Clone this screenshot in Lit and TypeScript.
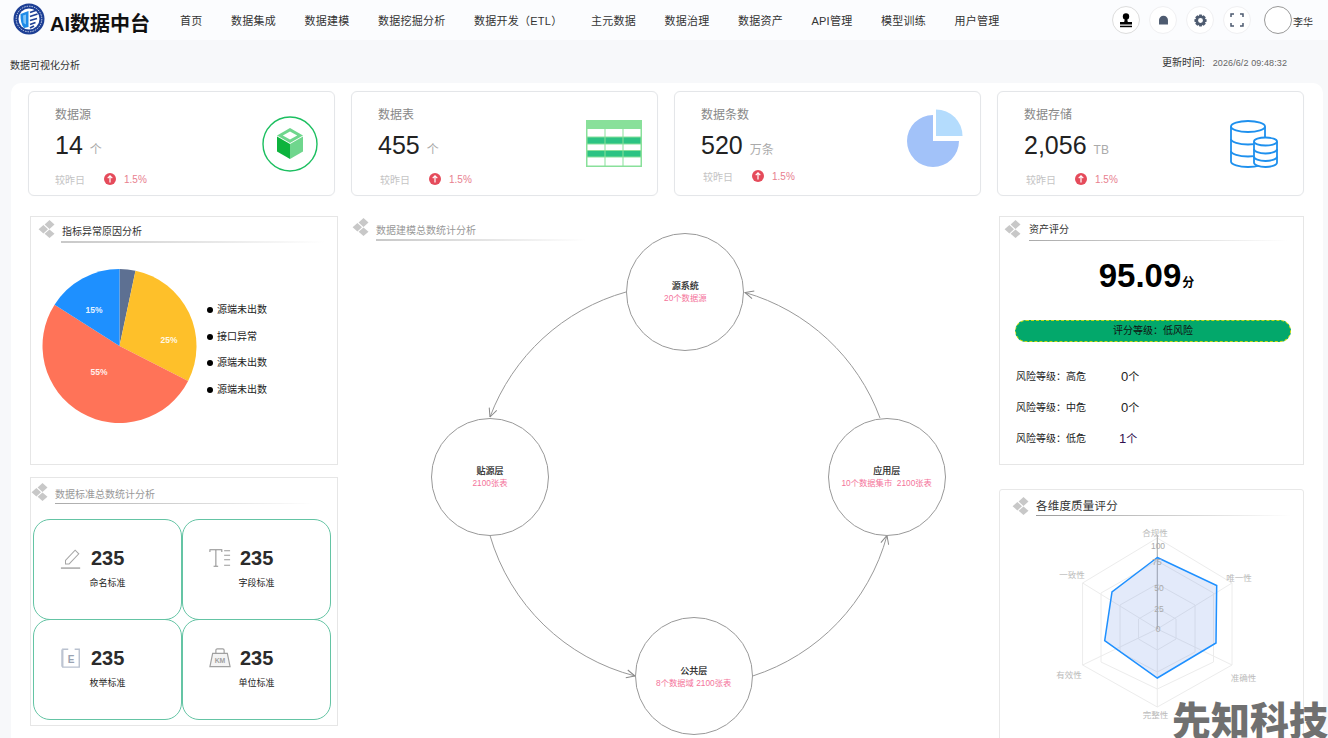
import { LitElement, html, css, svg } from "lit";
import { customElement } from "lit/decorators.js";

const NAV = ["首页","数据集成","数据建模","数据挖掘分析","数据开发（ETL）","主元数据","数据治理","数据资产","API管理","模型训练","用户管理"];

const diamonds = html`<svg class="dia" viewBox="0 0 18 18"><path d="M11.5 0 16.5 4.6 11.5 9 6.6 4.6Z M5.4 5 10 9.3 5.4 13.4 .6 9.3Z M11.5 9.6 16.5 13.8 11.5 18 6.6 13.8Z" fill="#c8c8c8"/></svg>`;

function arcPath(cx:number,cy:number,r:number,a:number,b:number){
  const p=(d:number)=>{const t=(d-90)*Math.PI/180;return `${(cx+r*Math.cos(t)).toFixed(2)} ${(cy+r*Math.sin(t)).toFixed(2)}`};
  return `M${cx} ${cy}L${p(a)}A${r} ${r} 0 ${b-a>180?1:0} 1 ${p(b)}Z`;
}

const PIE=[[0,12,"#5d7092"],[12,117,"#fec02a"],[117,302.5,"#ff7358"],[302.5,360,"#1e90ff"]] as [number,number,string][];
const PIE_LABELS=[[94,313,"15%"],[169,343,"25%"],[99,375,"55%"]] as [number,number,string][];

const RINGS=[
  [[1157.3,538],[1232,583],[1232,665],[1157.3,707],[1082.6,665],[1082.6,583]],
  [[1157.3,561],[1213.5,593],[1213.5,662],[1157.3,689],[1101,662],[1101,593]],
  [[1157.3,584],[1195,605],[1195,652],[1157.3,672],[1120,652],[1120,605]],
  [[1157.3,608],[1176,619],[1176,639],[1157.3,650],[1138.5,639],[1138.5,619]],
];
const DATA=[[1157.3,557.5],[1216.7,585.5],[1216,643],[1157.3,678],[1104.7,640.7],[1112,592]];
const pts=(a:number[][])=>a.map(p=>p.join(",")).join(" ");
const AXIS=[[1155,536,"合规性"],[1239,581,"唯一性"],[1243.5,681,"准确性"],[1155.5,718,"完整性"],[1069,678,"有效性"],[1072,578,"一致性"]] as [number,number,string][];
const TICKS=[[1158,549,"100"],[1157,565,"75"],[1159,591,"50"],[1159,612,"25"],[1158,632,"0"]] as [number,number,string][];

const NODES=[
  {x:685.3,y:291.7,t:"源系统",s:"20个数据源"},
  {x:490,y:476.7,t:"贴源层",s:"2100张表"},
  {x:886.7,y:476.7,t:"应用层",s:"10个数据集市\u00a0\u00a02100张表"},
  {x:693.7,y:676,t:"公共层",s:"8个数据域 2100张表"},
];
const ARCS=["M626 292A204 204 0 0 0 490 417","M490 535.5A204 204 0 0 0 635 676","M752.7 676A204 204 0 0 0 887 535.5","M880 418A204 204 0 0 0 745 292.5"];

const TABLE_ROWS=[[9,16.5,"#fff"],[17.5,23.5,"#2cc383"],[24.5,30,"#fff"],[31,36.5,"#2cc383"],[37.5,45.5,"#fff"]] as [number,number,string][];
const TABLE_COLS=[[1.5,17],[19.5,17],[37.5,17]];

const icoCube=html`<svg class="ci c1" viewBox="0 0 56 56"><circle cx="28" cy="28" r="27" fill="none" stroke="#1cbf60" stroke-width="1.4"/><path d="M28 12 41 19.5 28 27 15 19.5Z" fill="#6fd68d"/><path d="M28 15.5 35.200 19.5 28 23.500 20.800 19.5Z" fill="#fff"/><path d="M15 20.5 28 28V43L15 35.5Z" fill="#0db33d"/><path d="M41 20.5 28 28V43L41 35.5Z" fill="#6fd68d"/></svg>`;
const icoTable=html`<svg class="ci c2" viewBox="0 0 56 47"><rect width="56" height="47" fill="#89e09a"/>${TABLE_ROWS.flatMap(([a,b,c])=>TABLE_COLS.map(([x,w])=>svg`<rect x="${x}" y="${a}" width="${w}" height="${b-a}" fill="${c}"/>`))}</svg>`;
const icoPie=html`<svg class="ci c3" viewBox="0 0 56 58"><path d="${arcPath(26,32,26,90,360)}" fill="#a2c2f9"/><path d="${arcPath(29,27,26.5,0,90)}" fill="#b4dcfd"/></svg>`;
const icoDb=html`<svg class="ci c4" viewBox="0 0 48 48" fill="none" stroke="#1e90ee" stroke-width="1.8"><path d="M1 6.5V41.5C1 44.5 9 47 18 47S35 44.5 35 41.5V6.5"/><ellipse cx="18" cy="6.5" rx="17" ry="5.5"/><path d="M1 19C1 22 9 24.5 18 24.5S35 22 35 19M1 31C1 34 9 36.5 18 36.5S35 34 35 31"/><path d="M23.500 21.500V42.500C23.500 45 29 47 35.500 47S47 45 47 42.500V21.500Z" fill="#fff" stroke="none"/><path d="M24 21.500V42.500C24 45 29 47 35.500 47S47 45 47 42.500V21.500"/><ellipse cx="35.500" cy="21.500" rx="11.500" ry="4" fill="#fff"/><path d="M24 29C24 31.500 29 33.500 35.500 33.500S47 31.500 47 29M24 36.500C24 39 29 41 35.500 41S47 39 47 36.500"/></svg>`;

const CARDS=[
  {t:"数据源",v:"14",u:"个",i:icoCube,c:""},
  {t:"数据表",v:"455",u:"个",i:icoTable,c:"shift"},
  {t:"数据条数",v:"520",u:"万条",i:icoPie,c:"shift up"},
  {t:"数据存储",v:"2,056",u:"TB",i:icoDb,c:"shift"},
];

const icoPen=html`<svg class="si" viewBox="0 0 24 24" fill="none" stroke="#a6a6a6" stroke-width="1.1"><path d="M6 14.500 16.500 3.500 20.500 7.500 10 18.500H6Z"/><path d="M1 23H22" stroke-width="1.600"/></svg>`;
const icoT=html`<svg class="si" viewBox="0 0 24 24" fill="none" stroke="#8c8c8c" stroke-width="1.100"><path d="M1 5.500V3H14V5.500M7.500 3V21M5 21H10"/><path d="M16.500 4H23M16.500 9H23M16.500 14H23M16.500 20H23" stroke="#9a9a9a"/></svg>`;
const icoE=html`<svg class="si" viewBox="0 0 24 24" fill="none"><path d="M9 2.500H3V22H21V2.500H16" stroke="#b9c1cf" stroke-width="1.500"/><path d="M3.500 3H1.700V21.500" stroke="#c5ccd8"/><text x="12" y="17" text-anchor="middle" font-size="11" font-weight="700" fill="#9aa3b2" font-family="Liberation Sans">E</text></svg>`;
const icoKm=html`<svg class="si" viewBox="0 0 24 24" fill="none"><path d="M7.500 7V3.500C7.500 2.500 8.300 2 9 2H15C15.700 2 16.500 2.500 16.500 3.500V7" stroke="#a0a0a0" stroke-width="1.300"/><path d="M4 7H20L23 21.500H1Z" fill="#f4f4f4" stroke="#a0a0a0" stroke-width="1.300"/><text x="12" y="17.500" text-anchor="middle" font-size="7.500" font-weight="700" fill="#a0a0a0" font-family="Liberation Sans">KM</text></svg>`;
const STDS=[{i:icoPen,l:"命名标准"},{i:icoT,l:"字段标准"},{i:icoE,l:"枚举标准"},{i:icoKm,l:"单位标准"}];

@customElement("app-root")
export class AppRoot extends LitElement {
  static styles = css`
    :host{display:block;width:1328px;height:738px;overflow:hidden;position:relative;background:#f7f8fa;color:#222;font-family:"Liberation Sans","Noto Sans CJK SC",sans-serif;}
    *{box-sizing:border-box;}
    .hdr{height:40px;background:#fbfcfe;display:flex;align-items:center;padding-left:13px;}
    .logo{width:32px;height:32px;margin-top:-2px;flex:none;}
    .brand{font-size:20px;font-weight:700;color:#111;margin-left:5px;width:130px;flex:none;margin-top:8px;line-height:20px;}
    .nav{display:flex;gap:28.5px;font-size:11px;letter-spacing:.25px;color:#333;flex:none;width:932px;}
    .nav span{white-space:nowrap;}
    .tools{display:flex;align-items:center;gap:9px;}
    .tb{width:28px;height:28px;border-radius:50%;background:#fff;border:1px solid #f0f0f2;display:flex;align-items:center;justify-content:center;}
    .tb.on{border-color:#ddd;}
    .tb svg{width:16px;height:16px;}
    .tb svg.s13{width:13px;height:13px;}
    .ava{width:28px;height:28px;border-radius:50%;background:#fff;border:1px solid #999;margin-left:4px;}
    .who{font-size:10px;color:#333;margin-left:-8px;margin-top:2px;}
    .sub{height:43px;position:relative;display:flex;justify-content:space-between;padding:13px 41px 0 10px;font-size:10px;color:#333;}
    .sub .crumb{line-height:26px;}
    .sub .time{line-height:20px;}
    .sub .time b{font-weight:400;font-size:9px;color:#666;margin-left:8px;letter-spacing:.1px;}
    .main{margin-left:11px;width:1312px;height:700px;background:#fff;border-radius:10px 10px 0 0;padding:8px 17px 0;}
    .cards{display:grid;grid-template-columns:repeat(4,307px);gap:16px;}
    .card{height:105px;border:1px solid #e4e6e9;border-radius:6px;display:flex;justify-content:space-between;align-items:center;padding-left:26px;box-shadow:0 0 1px #eee;}
    .ctxt{align-self:flex-start;padding-top:14px;}
    .ct{font-size:12px;line-height:18px;color:#888;}
    .cv{display:flex;align-items:baseline;gap:7px;margin-top:6px;line-height:30px;font-size:25px;color:#222;}
    .cv i{font-style:normal;font-size:12px;color:#aaa;}
    .cc{display:flex;align-items:center;height:14px;margin-top:7px;font-size:10px;color:#c4c4c4;}
    .cc.shift{padding-left:2px;}
    .cc.up{margin-top:4px;}
    .cc .lb{width:49px;}
    .cc svg{width:12px;height:12px;margin-right:8px;}
    .cc .pc{color:#e8808f;}
    .ci{flex:none;}
    .c1{width:56px;height:56px;margin-right:16px;}
    .c2{width:56px;height:47px;margin-right:15px;}
    .c3{width:56px;height:58px;margin:-12px 17px 0 0;}
    .c4{width:48px;height:48px;margin-right:25px;}
    .cols{display:grid;grid-template-columns:308px 635px 307px;column-gap:12px;margin:20px 0 0 2px;}
    .cols>.mid{margin-right:-2px;}
    .left,.right{display:flex;flex-direction:column;}
    .left{gap:12px;}
    .right{gap:24px;margin-left:2px;}
    .panel{height:249px;border:1px solid #e6e6e6;padding:1px;background:#fff;flex:none;}
    .ph{display:flex;align-items:flex-start;gap:6px;}
    .dia{width:18px;height:18px;flex:none;}
    .pt{flex:1;font-size:10px;line-height:14px;background:linear-gradient(90deg,#c8c8c8,#fff) left bottom/100% 2px no-repeat;}
    .pA .ph{padding:2px 11px 0 6px;}
    .pA .pt{color:#333;padding:5px 0 4px 1px;margin-left:-1px;}
    .pB .ph{padding:4px 22px 0 0;margin-left:-1px;}
    .pB .pt{color:#999;padding:5px 0 2px 0;background-size:100% 1px;background-image:linear-gradient(90deg,#aaa,#fff);}
    .pD .ph{padding:2px 14px 0 3px;gap:7px;}
    .pD .pt{color:#333;padding:3px 0 4px 0;background-size:100% 1px;background-image:linear-gradient(90deg,#aaa,#fff);}
    .pE{height:300px;padding:0;border-color:#e8e8e8;border-radius:3px 3px 0 0;}
    .pE .ph{padding:7px 12px 0 12px;}
    .pE .pt{color:#333;font-size:11.500px;padding:2px 0 3px 0;letter-spacing:.2px;background-size:100% 1px;background-image:linear-gradient(90deg,#999,#fff);}
    .pieRow{display:flex;align-items:center;padding:26px 0 0 10px;}
    .pieRow svg{width:155px;height:155px;flex:none;}
    .leg{margin:7px 0 0 10px;display:flex;flex-direction:column;gap:12.400px;font-size:10px;line-height:14px;color:#222;}
    .leg div{display:flex;align-items:center;gap:4px;}
    .leg u{display:block;width:6px;height:6px;border-radius:50%;background:#000;}
    .std{display:grid;grid-template-columns:149px 149px;grid-auto-rows:100px;margin:15px 0 0 1px;}
    .sc{height:101px;border:1px solid #64c4a4;border-radius:17px;display:grid;grid-template-columns:57px auto;justify-content:start;align-content:start;padding:26px 0 0 0;}
    .si{width:22px;height:22px;margin:1px 0 0 26px;}
    .sn{font-size:20px;font-weight:700;color:#2b2b2b;line-height:25px;justify-self:start;width:33px;text-align:center;}
    .sl{grid-column:2;font-size:9px;line-height:14px;color:#222;margin-top:5px;width:33px;display:flex;justify-content:center;white-space:nowrap;}
    .score{margin-top:15px;text-align:center;font-size:33px;font-weight:700;line-height:40px;color:#000;padding-right:10px;}
    .score small{font-size:12px;margin-left:1px;}
    .bar{margin:17px 0 0 14px;width:276px;height:22px;border-radius:11px;background:#03a86b;border:1px dashed #c6d90f;text-align:center;font-size:10px;line-height:20px;color:#111;}
    .risk{margin:18px 0 0 15px;}
    .risk div{display:grid;grid-template-columns:105px auto;height:31px;align-items:center;font-size:10px;color:#222;}
    .risk em{font-style:normal;font-size:13px;}
    .risk em small{font-size:11px;}
    .risk .lo em{margin-left:-2px;color:#301050;}
    .mid{position:relative;height:522px;}
    .mid .ph{position:absolute;left:2px;top:2px;width:235px;}
    .mid .pt{color:#999;padding:6px 0 3px 0;}
    .wires{position:absolute;left:0;top:0;width:635px;height:522px;}
    .node{position:absolute;width:118px;height:118px;margin:-59px 0 0 -59px;border-radius:50%;border:1px solid #999;background:#fff;display:flex;flex-direction:column;align-items:center;justify-content:center;white-space:nowrap;padding-top:1px;}
    .node b{font-weight:400;font-size:9px;line-height:12px;color:#222;-webkit-text-stroke:.2px #222;}
    .node i{font-style:normal;font-size:8.300px;line-height:12px;color:#f4739a;}
    .radar{display:block;width:300px;height:222px;}
    .mark{position:absolute;right:0;bottom:0;font-size:39px;font-weight:900;line-height:40px;color:#707070;white-space:nowrap;font-family:"Noto Sans CJK SC",sans-serif;}
  `;

  render(){
    return html`
      <header class="hdr">
        <svg class="logo" viewBox="0 0 32 32">
          <circle cx="16" cy="16" r="15.500" fill="#1d3f95"/>
          <circle cx="16" cy="16" r="12.800" fill="none" stroke="#cfd8ee" stroke-width="1" stroke-dasharray="1.500 1"/>
          <circle cx="16" cy="16" r="10.500" fill="#fff"/>
          <path d="M7.500 11 15.500 8V24L11 25C8.500 22 7.500 18 7.500 11Z" fill="#1e8be8"/>
          <path d="M10 12.500 13 11.500V21.500L10.500 20Z" fill="#7fc4f7"/>
          <path d="M17 9.500 24 7M17 13.500 24.500 11M17 17.500 24 15.500M17 21.500 22.500 19.500M17 25 21 23" stroke="#1d3f95" stroke-width="1.800" fill="none"/>
        </svg>
        <div class="brand">AI数据中台</div>
        <nav class="nav">${NAV.map(n=>html`<span>${n}</span>`)}</nav>
        <div class="tools">
          <div class="tb on"><svg viewBox="0 0 16 16"><circle cx="8" cy="4.500" r="3.200"/><path d="M6.800 7H9.200L9.800 10H14V12.500H2V10H6.200Z"/><rect x="2" y="13.700" width="12" height="1.500"/></svg></div>
          <div class="tb"><svg class="s13" viewBox="0 0 16 16"><path d="M2.500 13V7.500C2.500 4.400 5 2 8 2S13.500 4.400 13.500 7.500V13Z" fill="#4e5b70"/></svg></div>
          <div class="tb"><svg class="s13" viewBox="0 0 16 16"><path fill="#4e5b70" fill-rule="evenodd" d="M6.500 0.500H9.500L10 2.500 11.900 1.500 14.500 4.100 13.500 6 15.500 6.500V9.500L13.500 10 14.500 11.900 11.900 14.500 10 13.500 9.500 15.500H6.500L6 13.500 4.100 14.500 1.500 11.900 2.500 10 .5 9.500V6.500L2.500 6 1.500 4.100 4.100 1.500 6 2.500ZM8 5A3 3 0 1 0 8 11 3 3 0 1 0 8 5Z"/></svg></div>
          <div class="tb"><svg viewBox="0 0 16 16" fill="none" stroke="#4e5b70" stroke-width="1.500"><path d="M5 2H2V5M11 2H14V5M14 11V14H11M5 14H2V11"/></svg></div>
          <div class="ava"></div>
          <div class="who">李华</div>
        </div>
      </header>
      <div class="sub">
        <div class="crumb">数据可视化分析</div>
        <div class="time">更新时间:<b>2026/6/2 09:48:32</b></div>
      </div>
      <main class="main">
        <section class="cards">
          ${CARDS.map(c=>html`<article class="card">
            <div class="ctxt">
              <div class="ct">${c.t}</div>
              <div class="cv">${c.v}<i>${c.u}</i></div>
              <div class="cc ${c.c}"><span class="lb">较昨日</span>
                <svg viewBox="0 0 12 12"><circle cx="6" cy="6" r="6" fill="#e54b5b"/><path d="M6 9.500V3M3.700 5.200 6 2.800 8.300 5.200" fill="none" stroke="#fff" stroke-width="1.200"/></svg>
                <span class="pc">1.5%</span></div>
            </div>${c.i}</article>`)}
        </section>
        <section class="cols">
          <div class="left">
            <div class="panel pA">
              <div class="ph">${diamonds}<div class="pt">指标异常原因分析</div></div>
              <div class="pieRow">
                <svg viewBox="42 269 155 155">
                  ${PIE.map(([a,b,c])=>svg`<path d="${arcPath(119.5,346,77,a,b)}" fill="${c}"/>`)}
                  ${PIE_LABELS.map(([x,y,t])=>svg`<text x="${x}" y="${y}" text-anchor="middle" font-size="8.500" font-weight="700" fill="#fff" fill-opacity=".9" font-family="Liberation Sans">${t}</text>`)}
                </svg>
                <div class="leg">
                  ${["源端未出数","接口异常","源端未出数","源端未出数"].map(t=>html`<div><u></u>${t}</div>`)}
                </div>
              </div>
            </div>
            <div class="panel pB">
              <div class="ph">${diamonds}<div class="pt">数据标准总数统计分析</div></div>
              <div class="std">
                ${STDS.map(s=>html`<div class="sc">${s.i}<div class="sn">235</div><div class="sl">${s.l}</div></div>`)}
              </div>
            </div>
          </div>
          <div class="mid">
            <svg class="wires" viewBox="350 216 635 522" fill="none">
              <defs><marker id="ah" viewBox="0 0 10 10" refX="9.500" refY="5" markerWidth="10" markerHeight="10" orient="auto" markerUnits="userSpaceOnUse"><path d="M1 1 9.500 5 1 9" fill="none" stroke="#888" stroke-width="1"/></marker></defs>
              ${ARCS.map(d=>svg`<path d="${d}" stroke="#999" stroke-width="1" marker-end="url(#ah)"/>`)}
            </svg>
            ${NODES.map(n=>html`<div class="node" style="left:${n.x-350}px;top:${n.y-216}px"><b>${n.t}</b><i>${n.s}</i></div>`)}
            <div class="ph">${diamonds}<div class="pt">数据建模总数统计分析</div></div>
          </div>
          <div class="right">
            <div class="panel pD">
              <div class="ph">${diamonds}<div class="pt">资产评分</div></div>
              <div class="score">95.09<small>分</small></div>
              <div class="bar">评分等级：低风险</div>
              <div class="risk">
                <div><span>风险等级：高危</span><em>0<small>个</small></em></div>
                <div><span>风险等级：中危</span><em>0<small>个</small></em></div>
                <div class="lo"><span>风险等级：低危</span><em>1<small>个</small></em></div>
              </div>
            </div>
            <div class="panel pE">
              <div class="ph">${diamonds}<div class="pt">各维度质量评分</div></div>
              <svg class="radar" viewBox="1000 516 300 222" font-family="Liberation Sans, Noto Sans CJK SC, sans-serif">
                ${RINGS.map(r=>svg`<polygon points="${pts(r)}" fill="none" stroke="#ececec" stroke-width="1"/>`)}
                ${RINGS[0].map(p=>svg`<line x1="1157.300" y1="629" x2="${p[0]}" y2="${p[1]}" stroke="#ececec"/>`)}
                <line x1="1157.300" y1="535" x2="1157.300" y2="629" stroke="#aaa"/>
                <polygon points="${pts(DATA)}" fill="#5b84e0" fill-opacity=".17" stroke="#1e90ff" stroke-width="1.500"/>
                ${AXIS.map(([x,y,t])=>svg`<text x="${x}" y="${y}" text-anchor="middle" font-size="8.500" fill="#bbb">${t}</text>`)}
                ${TICKS.map(([x,y,t])=>svg`<text x="${x}" y="${y}" text-anchor="middle" font-size="8.500" fill="#aaa">${t}</text>`)}
              </svg>
            </div>
          </div>
        </section>
      </main>
      <div class="mark">先知科技</div>
    `;
  }
}
